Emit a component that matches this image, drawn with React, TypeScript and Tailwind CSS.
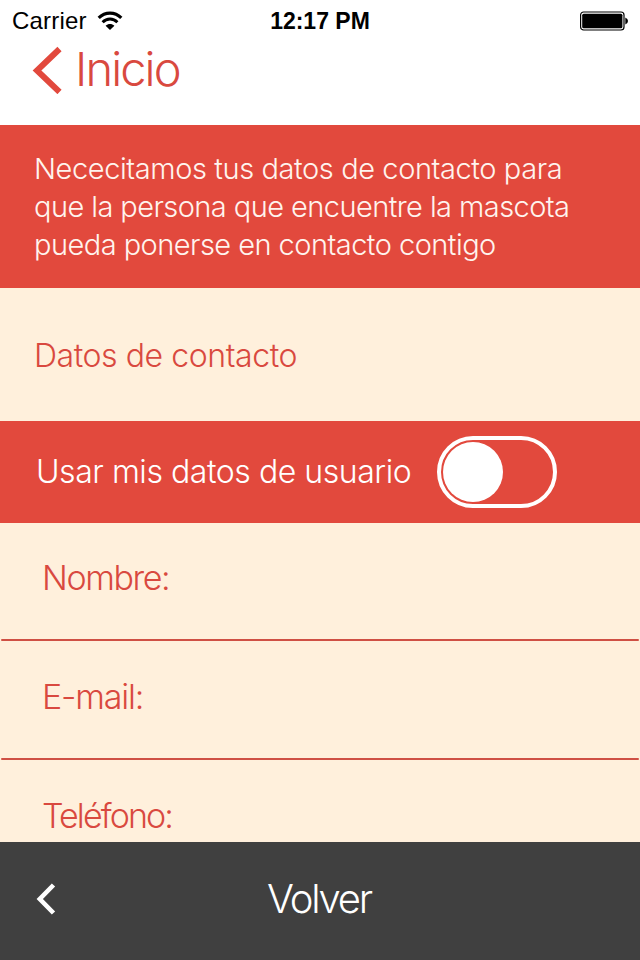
const FIELDS = [
  { label: "Nombre:", tracking: "tracking-[-1.4px]" },
  { label: "E-mail:", tracking: "tracking-[-1.2px]" },
  { label: "Teléfono:", tracking: "tracking-[-1.9px]" },
];

function StatusBar() {
  return (
    <div className="grid h-[42px] grid-cols-3 items-center px-3 font-['Liberation_Sans',sans-serif] font-normal text-black">
      <div className="flex items-center gap-[10px]">
        <span className="text-[24px] leading-[42px] tracking-[0.2px]">Carrier</span>
        <svg className="mb-[1px]" width="26" height="20" viewBox="0 0 26 20" fill="none" stroke="#000">
          <path d="M1.7 6.8C8.2 .5 17.8 .5 24.3 6.8" strokeWidth="3.2" />
          <path d="M5.6 11.2C9.9 7 16.1 7 20.4 11.2" strokeWidth="3" />
          <path d="M13 19L8.6 14.8C11.2 12.4 14.8 12.4 17.4 14.8Z" fill="#000" stroke="none" />
        </svg>
      </div>
      <span className="text-center text-[23px] font-bold leading-[42px] whitespace-nowrap">12:17 PM</span>
      <svg className="mb-[1px] justify-self-end" width="49" height="20" viewBox="0 0 49 20">
        <rect x="1.6" y="1" width="43.4" height="18" rx="3" fill="#fff" stroke="#000" strokeWidth="1.2" />
        <rect x="3.2" y="2.8" width="40.2" height="14.4" rx="1.5" />
        <path d="M46.3 6.5Q49 7.5 49 10T46.3 13.5Z" />
      </svg>
    </div>
  );
}

export default function App() {
  return (
    <div className="flex h-[960px] w-[640px] flex-col overflow-hidden bg-[#fff0dc] font-['Inter','Liberation_Sans',sans-serif] font-light whitespace-nowrap text-[#d9493f]">
      <header className="h-[125px] shrink-0 bg-white">
        <StatusBar />
        <div className="flex h-[56px] items-center pl-8">
          <svg width="31" height="48" viewBox="0 0 31 48" fill="none" stroke="#e2493d" strokeWidth="6">
            <path d="M27.5 3L5 24.5L27.5 46" />
          </svg>
          <span className="ml-3 pb-[2px] text-[47px] leading-[54px] tracking-[-1.9px]">Inicio</span>
        </div>
      </header>
      <section className="h-[163px] shrink-0 bg-[#e2493d] pt-[25px] pl-[34px] text-[29px] leading-[38px] text-[#fff4ee]">
        <p className="tracking-[-0.41px]">Nececitamos tus datos de contacto para</p>
        <p className="tracking-[-0.57px]">que la persona que encuentre la mascota</p>
        <p className="tracking-[-0.54px]">pueda ponerse en contacto contigo</p>
      </section>
      <h2 className="flex h-[133px] shrink-0 items-center pt-[3px] pl-[34px] text-[32px] tracking-[-0.43px]">Datos de contacto</h2>
      <section className="flex h-[102px] shrink-0 items-center bg-[#e2493d] pl-9 text-white">
        <span className="w-[401px] text-[32px] tracking-[-0.45px]">Usar mis datos de usuario</span>
        <span className="flex h-[72px] w-[120px] items-center rounded-full border-4 border-white pl-[2px]">
          <span className="size-[60px] rounded-full bg-white" />
        </span>
      </section>
      <main className="h-[319px] shrink-0 overflow-hidden">
        {FIELDS.map(({ label, tracking }) => (
          <div key={label} className="mx-[1px] h-[119px]">
            <div className={`h-[116px] pl-[41px] text-[34px] leading-[109px] ${tracking}`}>{label}</div>
            <div className="h-[2px] rounded-full bg-[#cf5044]" />
          </div>
        ))}
      </main>
      <footer className="grid h-[118px] shrink-0 grid-cols-[120px_400px_120px] items-center bg-[#404040] pb-1 text-white">
        <svg className="ml-9" width="20" height="32" viewBox="0 0 20 32" fill="none" stroke="#fff" strokeWidth="4.6">
          <path d="M17.5 2L3.8 16L17.5 30" />
        </svg>
        <span className="pr-[2px] text-center text-[40px] leading-[48px] tracking-[-2.2px]">Volver</span>
      </footer>
    </div>
  );
}
